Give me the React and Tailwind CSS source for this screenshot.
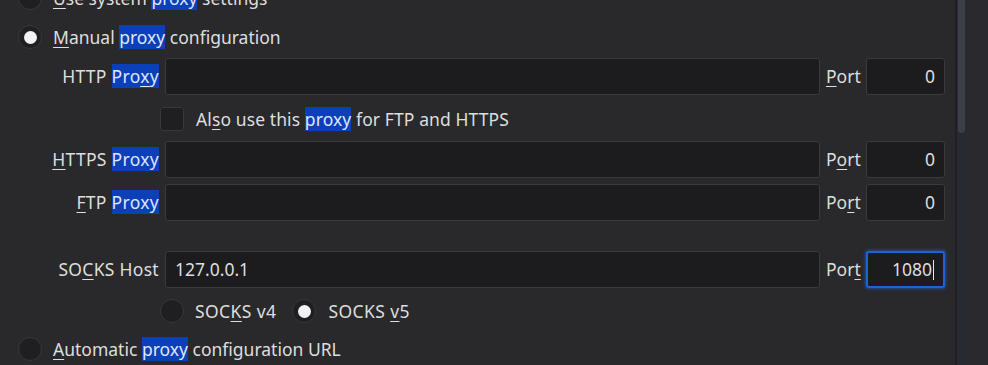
import React from "react";

const HL = ({ children }) => (
  <span className="bg-[#0b40b8] text-[#dfe6ff]">{children}</span>
);
const U = ({ children }) => <span className="underline underline-offset-[3px] decoration-1">{children}</span>;

const Radio = ({ checked }) => (
  <div className="w-6 h-6 rounded-full bg-[#1f1f22] border border-[#38383c] flex items-center justify-center shrink-0">
    {checked && <div className="w-[13px] h-[13px] rounded-full bg-[#f2f2f2]" />}
  </div>
);

const Input = ({ value = "", right = false, focused = false, className = "" }) => (
  <div
    className={
      "h-[37px] rounded-[3px] bg-[#1c1c1f] flex items-center " +
      (focused
        ? "border-2 border-[#1a63d8] shadow-[0_0_3px_1px_rgba(30,100,220,0.6)] "
        : "border border-[#3a3a3e] ") +
      (right ? "justify-end pr-[9px] " : "pl-[9px] ") +
      className
    }
  >
    <span>{value}</span>
    {focused && <span className="w-px h-[20px] bg-[#e6e6e6] ml-px" />}
  </div>
);

const ProxyRow = ({ label, port, portValue, hostValue, focused, className = "" }) => (
  <div className={"flex items-center " + className}>
    <div className="w-[159px] text-right whitespace-nowrap tracking-[0.3px]">{label}</div>
    <Input value={hostValue} className="ml-[6px] w-[655px]" />
    <div className="ml-[6px] w-[35px] whitespace-nowrap">{port}</div>
    <Input value={portValue} right focused={focused} className="ml-[5px] w-[79px]" />
  </div>
);

export default function App() {
  return (
    <div
      className="w-[988px] h-[365px] overflow-hidden bg-[#29292c] flex text-[#dedede] text-[17.5px]"
      style={{ fontFamily: '"Noto Sans", "Open Sans", sans-serif' }}
    >
      <div className="w-[955px] flex flex-col">
        <div className="flex items-center gap-[11px] pl-[18px] mt-[-14px] h-6">
          <Radio />
          <span className="whitespace-nowrap"><U>U</U>se system <HL>proxy</HL> settings</span>
        </div>
        <div className="flex items-center gap-[11px] pl-[18px] mt-[15px] h-6">
          <Radio checked />
          <span className="whitespace-nowrap"><U>M</U>anual <HL>proxy</HL> configuration</span>
        </div>
        <ProxyRow
          className="mt-[9px]"
          label={<>HTTP <HL>Pro<U>x</U>y</HL></>}
          port={<><U>P</U>ort</>}
          portValue="0"
        />
        <div className="flex items-center mt-[12px] h-6 pl-[160px] gap-[12px]">
          <div className="w-6 h-6 rounded-[3px] bg-[#1f1f22] border border-[#38383c]" />
          <span className="whitespace-nowrap tracking-[0.1px]">Al<U>s</U>o use this <HL>proxy</HL> for FTP and HTTPS</span>
        </div>
        <ProxyRow
          className="mt-[10px]"
          label={<><U>H</U>TTPS <HL>Proxy</HL></>}
          port={<>P<U>o</U>rt</>}
          portValue="0"
        />
        <ProxyRow
          className="mt-[6px]"
          label={<><U>F</U>TP <HL>Proxy</HL></>}
          port={<>Po<U>r</U>t</>}
          portValue="0"
        />
        <ProxyRow
          className="mt-[30px]"
          label={<>SO<U>C</U>KS Host</>}
          hostValue="127.0.0.1"
          port={<>Por<U>t</U></>}
          portValue="1080"
          focused
        />
        <div className="flex items-center mt-[11px] h-6 pl-[160px]">
          <Radio />
          <span className="ml-[11px] whitespace-nowrap tracking-[0.4px]">SOC<U>K</U>S v4</span>
          <div className="ml-[16px]"><Radio checked /></div>
          <span className="ml-[12px] whitespace-nowrap tracking-[0.4px]">SOCKS <U>v</U>5</span>
        </div>
        <div className="flex items-center gap-[11px] pl-[18px] mt-[14px] h-6">
          <Radio />
          <span className="whitespace-nowrap"><U>A</U>utomatic <HL>proxy</HL> configuration URL</span>
        </div>
      </div>
      <div className="w-[33px] flex">
        <div className="w-[2px] bg-[#1f2024]" />
        <div className="w-[9px] bg-[#262a31] flex flex-col">
          <div className="h-[133px] mx-[1px] rounded-b-[4px] bg-[#3a3f49]" />
        </div>
        <div className="flex-1 bg-[#2a2a2e]" />
      </div>
    </div>
  );
}
